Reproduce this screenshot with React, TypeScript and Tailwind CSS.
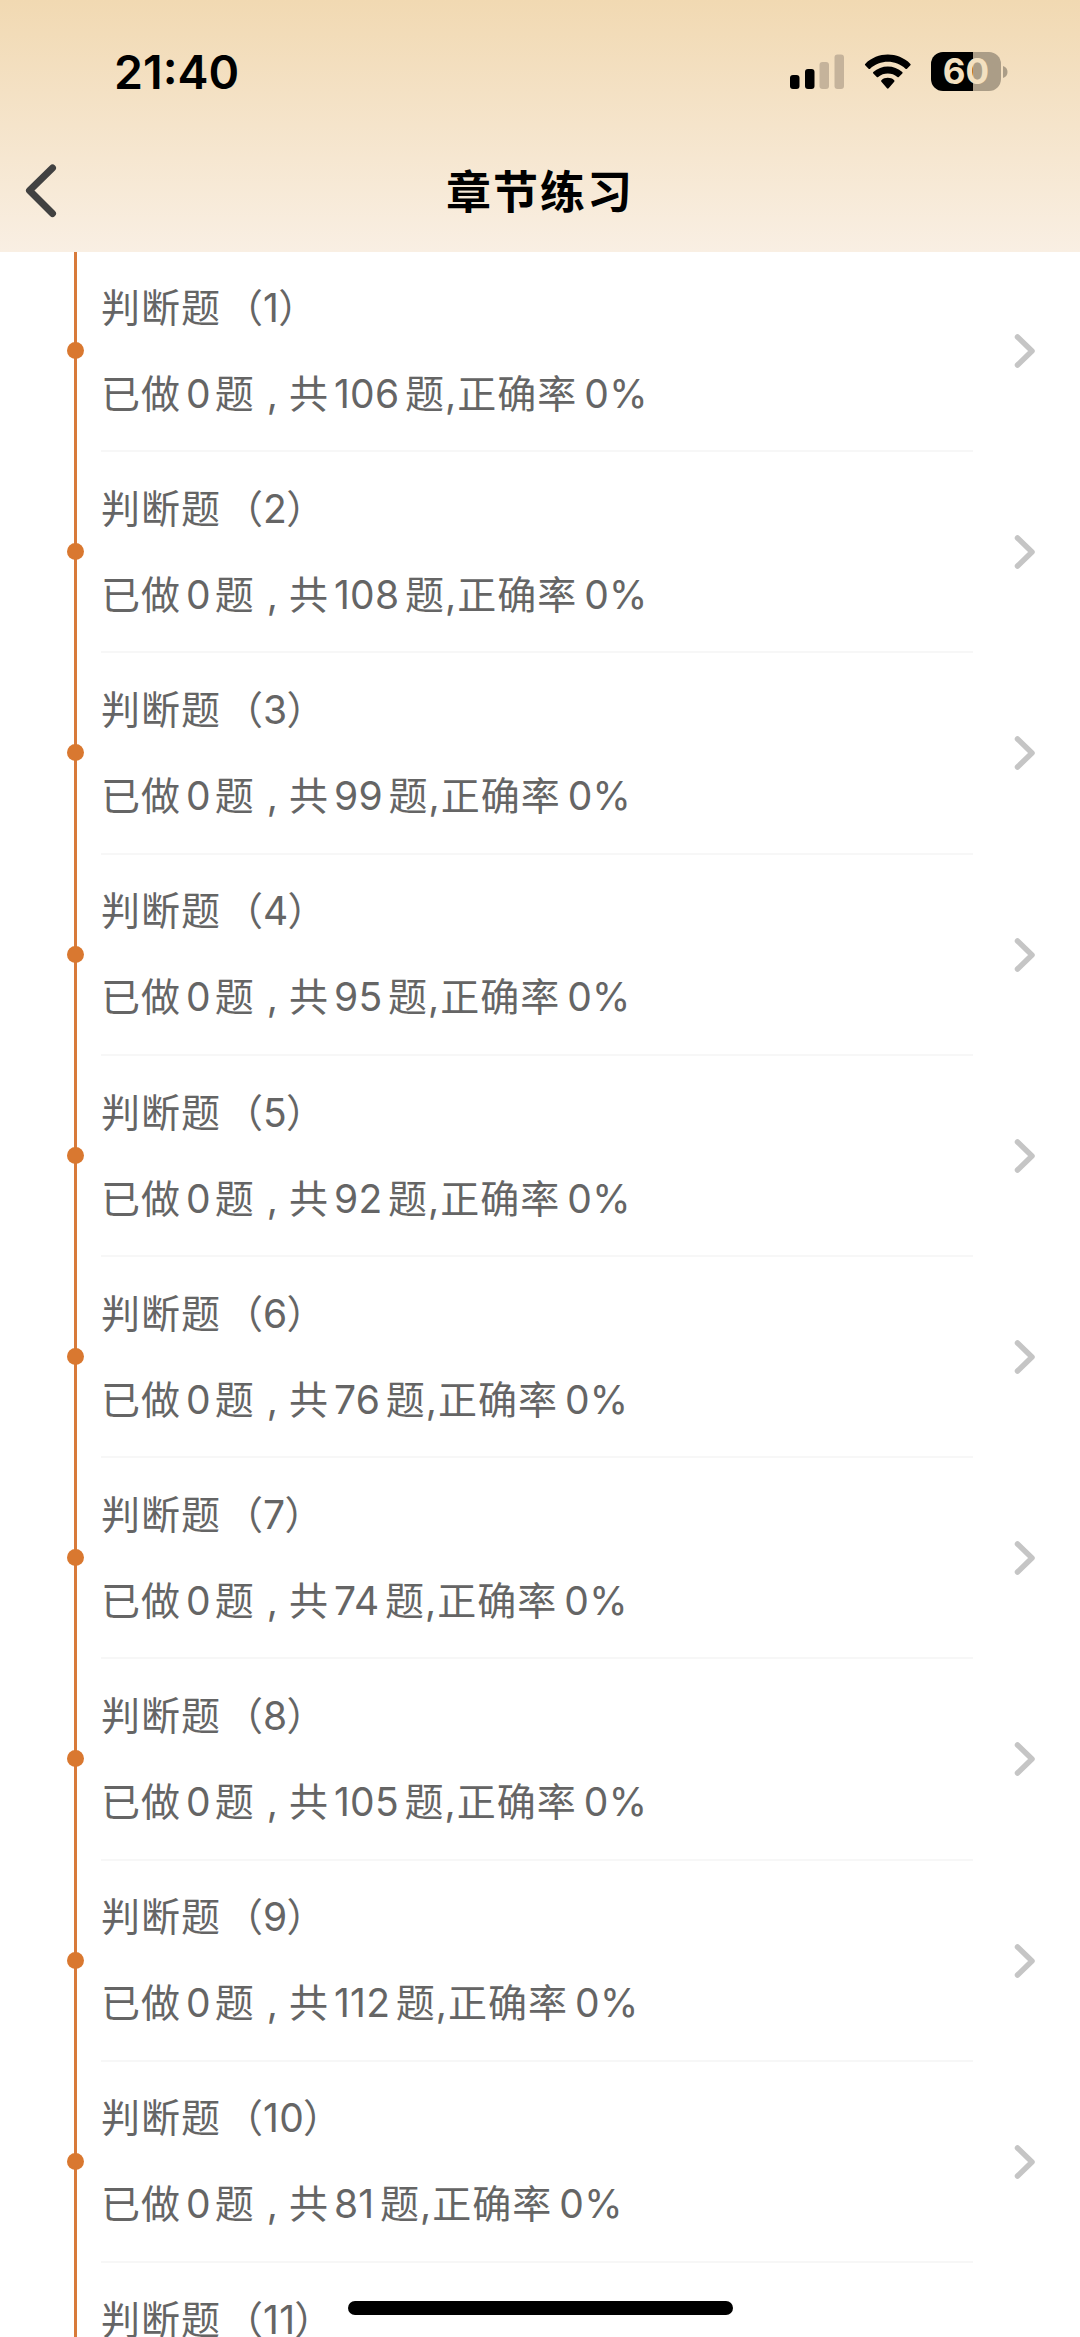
const chapters: { id: number; total?: number }[] = [
  { id: 1, total: 106 },
  { id: 2, total: 108 },
  { id: 3, total: 99 },
  { id: 4, total: 95 },
  { id: 5, total: 92 },
  { id: 6, total: 76 },
  { id: 7, total: 74 },
  { id: 8, total: 105 },
  { id: 9, total: 112 },
  { id: 10, total: 81 },
  { id: 11 },
];

function StatusBar() {
  return (
    <div className="flex h-[140px] items-start justify-between pr-[72px] pl-[114px]">
      <span className="mt-[43px] font-[Inter,sans-serif] text-[46.500px] leading-[58px] font-semibold">21:40</span>
      <div className="mt-[52px] flex h-[40px] items-start">
        <svg className="mt-[2px]" width="56" height="36" viewBox="0 0 56 36">
          <rect x="1" y="21" width="9.5" height="14" rx="3" fill="#000" />
          <rect x="16" y="15" width="9.5" height="20" rx="3" fill="#000" />
          <rect x="30.500" y="8" width="9.500" height="27" rx="3" fill="#c5b39b" />
          <rect x="45.500" y="0.500" width="9.500" height="34.500" rx="3" fill="#c5b39b" />
        </svg>
        <svg className="mt-[2px] ml-[19px]" width="48" height="36" viewBox="0 0 48 36" fill="#000">
          <path d="M1.200 9.900C13.800-2.500 33.800-2.500 46.400 9.900Q47 10.600 46.400 11.300L43 14.700Q42.200 15.300 41.500 14.700C31.500 5.500 16.100 5.500 6.100 14.700Q5.400 15.300 4.600 14.700L1.200 11.300Q.6 10.600 1.200 9.900Z" />
          <path d="M9.300 18C17.300 10.500 30.300 10.500 38.300 18Q39 18.700 38.300 19.500L34.800 22.900Q34.100 23.500 33.400 22.900C28 18.300 19.600 18.300 14.200 22.900Q13.500 23.500 12.800 22.900L9.300 19.500Q8.600 18.700 9.300 18Z" />
          <path d="M17.400 26.200C20.800 23 26.800 23 30.200 26.200Q30.900 27 30.200 27.700L24.600 34.300Q23.800 35.100 23 34.300L17.400 27.700Q16.700 27 17.400 26.200Z" />
        </svg>
        <div className="ml-[19px] flex items-center">
          <div className="flex h-[39px] w-[70px] items-center justify-center rounded-[12px] bg-linear-to-r from-black from-60% to-[#ab9d87] to-60% font-[Inter,sans-serif] text-[35px] font-bold text-[#f3e0c0]">
            60
          </div>
          <svg className="ml-[2px]" width="5" height="14" viewBox="0 0 5 14">
            <path d="M0 1Q4.500 2.500 4.500 7T0 13Z" fill="#ab9d87" />
          </svg>
        </div>
      </div>
    </div>
  );
}

function NavBar() {
  return (
    <div className="grid h-[112px] grid-cols-[120px_1fr_120px] items-start">
      <svg className="mt-[22px] ml-[22px]" width="38" height="56" viewBox="0 0 38 56" fill="none">
        <path d="M30.500 6 7.500 28.500 30.500 51.500" stroke="#414141" strokeWidth="7" strokeLinecap="round" strokeLinejoin="round" />
      </svg>
      <h1 className="mt-[20px] text-center text-[45px] leading-[66px] font-bold tracking-[2px]">章节练习</h1>
    </div>
  );
}

function ChapterRow({ id, total }: { id: number; total?: number }) {
  return (
    <li className="flex h-[201.200px] shrink-0">
      <div className="grid w-[101px] shrink-0 justify-items-center pl-[49px]">
        <div className="col-start-1 row-start-1 h-full w-[3px] bg-[#d87a3a]" />
        <div className="col-start-1 row-start-1 mt-[90px] size-[17px] rounded-full bg-[#d97830]" />
      </div>
      <div className="flex h-[200.200px] w-[872px] shrink-0 flex-col border-b-2 border-[#f7f7f7] whitespace-nowrap">
        <div className="mt-[27px] flex h-[58px] items-center">
          <span className="tracking-[1px]">判断题</span>
          <span className="ml-[3px]">（</span>
          <span className="tracking-[0.300px]">{id}</span>
          <span className="ml-[-1px]">）</span>
        </div>
        {total !== undefined && (
          <div className="mt-[28px] flex h-[58px] items-center">
            <span className="tracking-[1px]">已做</span>
            <span className="ml-[5px]">0</span>
            <span className="ml-[4px]">题</span>
            <span className="ml-[13px]">,</span>
            <span className="ml-[11px]">共</span>
            <span className="ml-[6px] tracking-[0.300px]">{total}</span>
            <span className="ml-[5.500px]">题</span>
            <span className="ml-[1px]">,</span>
            <span className="ml-[1px] tracking-[1px]">正确率</span>
            <span className="ml-[7px] tracking-[0.300px]">0%</span>
          </div>
        )}
      </div>
      <div className="flex flex-1 justify-end pr-[42.500px]">
        <svg className="mt-[80px]" width="26" height="38" viewBox="0 0 26 38" fill="none">
          <path d="M5.500 5 20 19 5.500 33" stroke="#c5c5c5" strokeWidth="5.500" strokeLinecap="round" strokeLinejoin="round" />
        </svg>
      </div>
    </li>
  );
}

export default function App() {
  return (
    <div className="relative flex h-[2337px] w-[1080px] flex-col overflow-hidden bg-white font-[Inter,'Noto_Sans_CJK_SC',sans-serif]">
      <header className="h-[252px] shrink-0 bg-linear-to-b from-[#f1d9b2] to-[#f9efe3] text-black">
        <StatusBar />
        <NavBar />
      </header>
      <ul className="flex flex-col text-[39px] text-[#656565]">
        {chapters.map((c) => (
          <ChapterRow key={c.id} id={c.id} total={c.total} />
        ))}
      </ul>
      <div className="absolute bottom-[22px] left-[348px] h-[14px] w-[385px] rounded-full bg-black" />
    </div>
  );
}
